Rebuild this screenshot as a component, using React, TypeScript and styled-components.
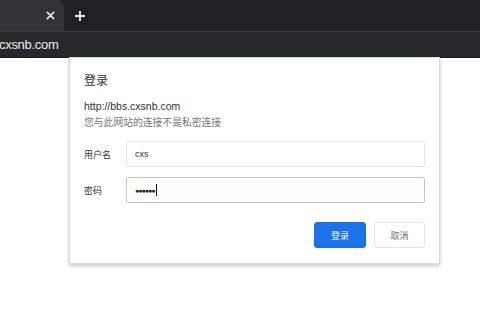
import React from "react";
import styled, { createGlobalStyle } from "styled-components";

const Global = createGlobalStyle`
  html, body { margin: 0; padding: 0; background: #fff; }
  body { font-family: "Noto Sans CJK SC", "Liberation Sans", Arial, sans-serif; width: 480px; height: 320px; overflow: hidden; }
`;

const TabStrip = styled.div`
  height: 31px;
  background: #202124;
  display: flex;
  align-items: stretch;
`;

const ActiveTab = styled.div`
  width: 64px;
  background: #323336;
  border-top-right-radius: 8px;
  display: flex;
  align-items: center;
  justify-content: flex-end;
  padding-right: 7px;
  box-sizing: border-box;
`;

const TabIcon = styled.div`
  width: 14px;
  height: 14px;
  display: flex;
  align-items: center;
  justify-content: center;
`;

const NewTab = styled.div`
  margin-left: 10px;
  display: flex;
  align-items: center;
`;

const Toolbar = styled.div`
  height: 25px;
  background: #28292c;
  border-top: 1px solid #3a3b3f;
  border-bottom: 1px solid #1b1c1e;
  display: flex;
  align-items: center;
  color: #e8eaed;
  font-family: "Liberation Sans", Arial, sans-serif;
  font-size: 13px;
`;

const UrlText = styled.span`
  margin-left: -1px;
  letter-spacing: -0.3px;
`;

const Page = styled.div`
  padding-left: 69px;
`;

const Dialog = styled.div`
  width: 371px;
  height: 207px;
  box-sizing: border-box;
  background: #fff;
  margin-top: -1px;
  border: 1px solid #d8d8d8;
  box-shadow: 0 2px 4px rgba(0,0,0,0.22);
  padding: 14px 14px 0 14px;
  display: flex;
  flex-direction: column;
`;

const Title = styled.div`
  font-size: 12px;
  color: #333;
  line-height: 16px;
  margin-bottom: 11px;
`;

const Origin = styled.div`
  font-family: "Liberation Sans", Arial, sans-serif;
  font-size: 10.5px;
  color: #333;
  line-height: 14px;
`;

const Note = styled.div`
  font-size: 9.8px;
  color: #777;
  line-height: 14px;
  margin-top: 2px;
`;

const Row = styled.div<{ $top: number }>`
  display: flex;
  align-items: center;
  margin-top: ${p => p.$top}px;
`;

const Label = styled.div`
  width: 42px;
  font-size: 9px;
  color: #333;
`;

const Input = styled.div<{ $focus?: boolean }>`
  width: 299px;
  height: 26px;
  box-sizing: border-box;
  border: 1px solid ${p => (p.$focus ? "#b9c7d8" : "#e6e6e6")};
  background: ${p => (p.$focus ? "#fffefa" : "#fff")};
  border-radius: 2px;
  display: flex;
  align-items: center;
  padding-left: 8px;
  font-family: "Liberation Sans", Arial, sans-serif;
  font-size: 9px;
  color: #333;
`;

const Dots = styled.span`
  font-size: 7px;
  letter-spacing: -1px;
  color: #222;
`;

const Caret = styled.span`
  display: inline-block;
  width: 1px;
  height: 12px;
  background: #111;
  margin-left: 2px;
`;

const Actions = styled.div`
  display: flex;
  justify-content: flex-end;
  gap: 8px;
  margin-top: 19px;
`;

const Button = styled.div<{ $primary?: boolean }>`
  width: ${p => (p.$primary ? 52 : 51)}px;
  height: 26px;
  box-sizing: border-box;
  border-radius: 3px;
  display: flex;
  align-items: center;
  justify-content: center;
  font-size: 9px;
  background: ${p => (p.$primary ? "#1a73e8" : "#fff")};
  color: ${p => (p.$primary ? "#fff" : "#5f6f8a")};
  border: 1px solid ${p => (p.$primary ? "#1a6fe0" : "#e3e5e8")};
`;

export default function App() {
  return (
    <>
      <Global />
      <TabStrip>
        <ActiveTab>
          <TabIcon>
            <svg width="9" height="9" viewBox="0 0 10 10">
              <path d="M1.5 1.5 L8.5 8.5 M8.5 1.5 L1.5 8.5" stroke="#e8eaed" strokeWidth="1.8" strokeLinecap="round" />
            </svg>
          </TabIcon>
        </ActiveTab>
        <NewTab>
          <svg width="12" height="12" viewBox="0 0 12 12">
            <path d="M6 1 V11 M1 6 H11" stroke="#e8eaed" strokeWidth="1.8" />
          </svg>
        </NewTab>
      </TabStrip>
      <Toolbar>
        <UrlText>cxsnb.com</UrlText>
      </Toolbar>
      <Page>
        <Dialog>
          <Title>登录</Title>
          <Origin>http://bbs.cxsnb.com</Origin>
          <Note>您与此网站的连接不是私密连接</Note>
          <Row $top={12}>
            <Label>用户名</Label>
            <Input>cxs</Input>
          </Row>
          <Row $top={10}>
            <Label>密码</Label>
            <Input $focus>
              <Dots>●●●●●●</Dots>
              <Caret />
            </Input>
          </Row>
          <Actions>
            <Button $primary>登录</Button>
            <Button>取消</Button>
          </Actions>
        </Dialog>
      </Page>
    </>
  );
}
